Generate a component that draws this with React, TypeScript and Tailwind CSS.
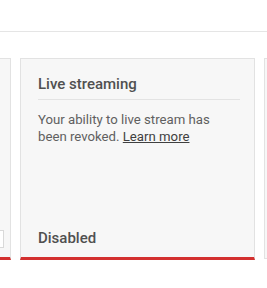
export default function App() {
    return (
        <div className="w-[267px] h-[288px] overflow-hidden bg-white font-['Roboto',sans-serif]">
            <div className="h-[32px] border-b border-[#e5e5e5]" />

            <div className="mt-[26px] flex gap-[9px] -ml-[224px]">
                {/* previous card, cut off */}
                <div className="w-[235px] h-[202px] shrink-0 flex flex-col bg-[#f7f7f7] border border-[#e2e2e2] border-b-[3px] border-b-[#d3302f]">
                    <div className="mt-auto mb-[9px] flex justify-end pr-[6px]">
                        <div className="w-[60px] h-[18px] bg-white border border-[#d9d9d9]" />
                    </div>
                </div>

                {/* live streaming card */}
                <div className="w-[235px] h-[202px] shrink-0 flex flex-col bg-[#f7f7f7] border border-[#e2e2e2] border-b-[3px] border-b-[#d3302f]">
                    <div className="px-[17px] pt-[15px]">
                        <h2 className="text-[15px] leading-[20px] font-medium text-[#505050] pb-[5px] mr-[-3px] border-b border-[#e3e3e3]">
                            Live streaming
                        </h2>
                        <p className="mt-[11px] text-[13.2px] leading-[17px] text-[#606060]">
                            Your ability to live stream has been revoked.{' '}
                            <a href="#" className="underline text-[#404040]">Learn more</a>
                        </p>
                    </div>
                    <div className="mt-auto px-[17px] pb-[9px] text-[15px] leading-[20px] font-medium text-[#505050]">
                        Disabled
                    </div>
                </div>

                {/* next card, cut off */}
                <div className="w-[235px] h-[201px] shrink-0 bg-[#f7f7f7] border border-[#e2e2e2]" />
            </div>
        </div>
    );
}
